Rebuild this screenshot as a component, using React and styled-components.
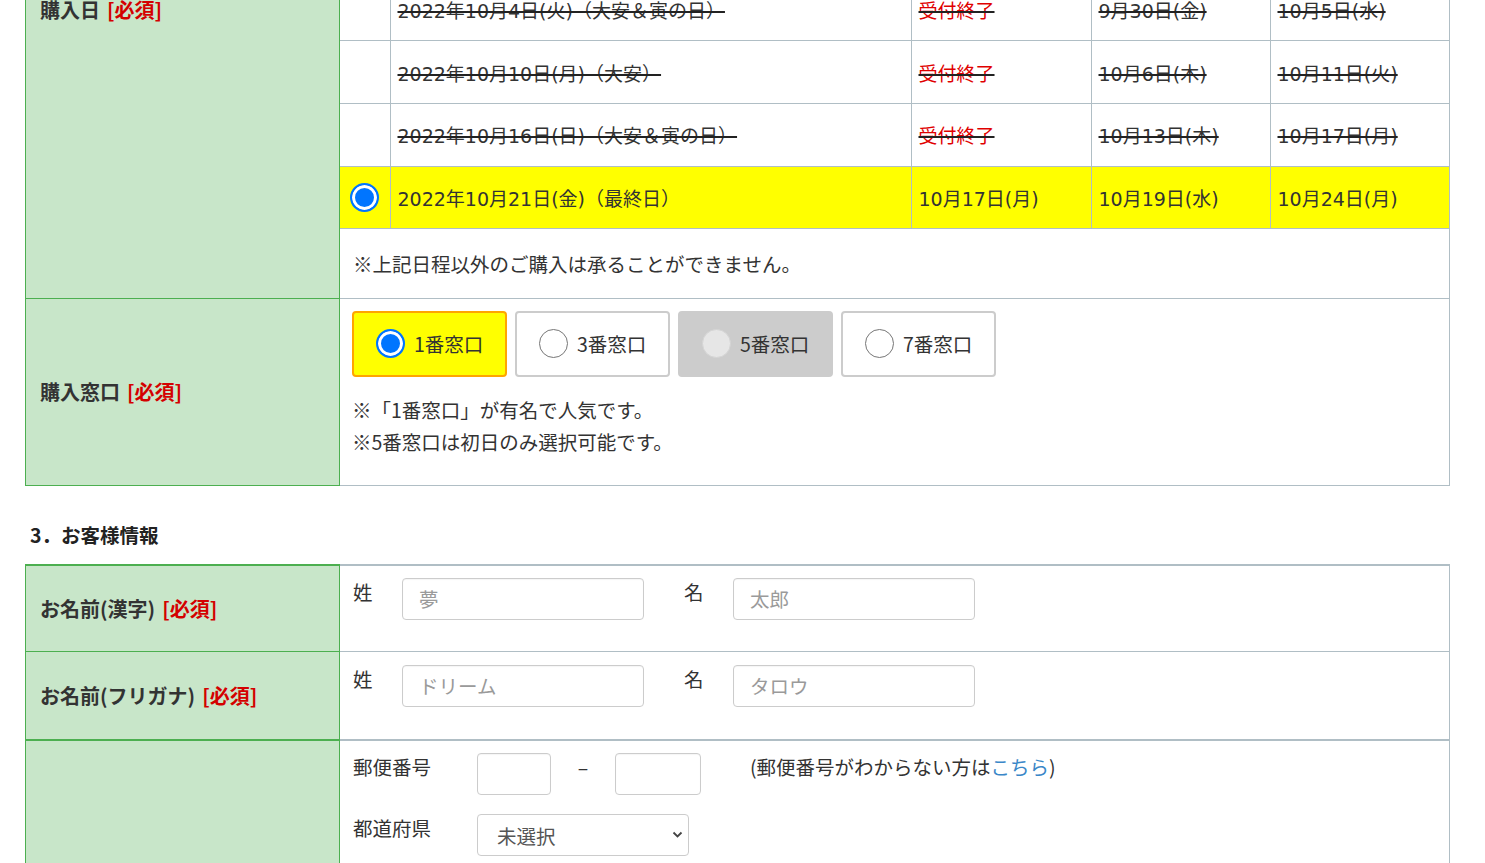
import React from 'react';
import styled, { createGlobalStyle, css } from 'styled-components';

const GlobalStyle = createGlobalStyle`
  html, body { margin: 0; padding: 0; background: #fff; }
  body {
    font-family: "Noto Sans CJK JP", "Noto Sans", sans-serif;
    font-size: 19.5px;
    color: #333;
  }
  * { box-sizing: border-box; }
`;

const Page = styled.div`
  width: 1425px;
  margin: -279px 0 0 25px;
`;

const FormTable = styled.table`
  width: 100%;
  border-collapse: collapse;
  table-layout: fixed;
`;

const Label = styled.th`
  width: 314px;
  background: #c8e6c9;
  border: 1px solid #4caf50;
  border-top-width: ${p => (p.$thick ? '2px' : '1px')};
  text-align: left;
  vertical-align: middle;
  padding: 0 14px;
  font-weight: bold;
  font-size: 20px;
  color: #333;
`;

const Required = styled.span`
  color: #d40000;
  margin-left: 7px;
`;

const Cell = styled.td`
  border: 1px solid #b0bec5;
  border-top-width: ${p => (p.$thick ? '2px' : '1px')};
  padding: ${p => p.$pad || '0'};
  vertical-align: top;
`;

const DateTable = styled.table`
  width: 100%;
  border-collapse: collapse;
  table-layout: fixed;
  border-style: hidden;
`;

const DateRow = styled.tr`
  background: ${p => (p.$active ? '#ffff00' : '#fff')};
`;

const HeadCell = styled.th`
  height: 68px;
  border: 1px solid #b0bec5;
  background: #eceff1;
  font-weight: bold;
  text-align: left;
  padding: 0 8px;
`;

const DateCell = styled.td`
  height: 62.7px;
  border: 1px solid #b0bec5;
  padding: 0 7px;
  vertical-align: middle;
  white-space: nowrap;
  font-family: "DejaVu Sans", "Noto Sans CJK JP", sans-serif;
  font-size: 19px;
  text-align: ${p => (p.$center ? 'center' : 'left')};
  ${p =>
    p.$closed &&
    css`
      text-decoration: line-through;
      text-decoration-thickness: 2px;
      text-decoration-color: #222;
    `}
`;

const Closed = styled.span`
  color: #e00000;
`;

const NoteCell = styled.td`
  height: 69px;
  border: 1px solid #b0bec5;
  padding: 0 13px;
  vertical-align: middle;
`;

const RadioDot = styled.span`
  display: inline-block;
  flex: none;
  width: 29px;
  height: 29px;
  border-radius: 50%;
  vertical-align: middle;
  ${p =>
    p.$checked
      ? css`
          background: #0075ff;
          border: 2px solid #0075ff;
          box-shadow: inset 0 0 0 3px #fff;
        `
      : p.$disabled
      ? css`
          background: #e6e6e6;
          border: 1px solid #d4d4d4;
        `
      : css`
          background: #fff;
          border: 1.5px solid #767676;
        `}
`;

const WindowList = styled.div`
  display: flex;
  gap: 8px;
`;

const WindowOption = styled.label`
  display: flex;
  align-items: center;
  gap: 9px;
  width: 155px;
  height: 66px;
  padding-left: 22px;
  border: 2px solid ${p => (p.$checked ? '#ffa500' : '#ccc')};
  border-radius: 4px;
  background: ${p => (p.$checked ? '#ffff00' : p.$disabled ? '#ccc' : '#fff')};
  color: #333;
`;

const Notes = styled.div`
  margin-top: 17px;
  line-height: 32px;
`;

const SectionTitle = styled.h3`
  margin: 37px 0 17px 5px;
  font-size: 19.5px;
  font-weight: bold;
  line-height: 24px;
  color: #222;
`;

const FieldRow = styled.div`
  display: flex;
  align-items: flex-start;
  margin-top: ${p => p.$mt || 0}px;
`;

const FieldLabel = styled.span`
  flex: none;
  width: ${p => p.$w}px;
  margin-left: ${p => p.$ml || 0}px;
  line-height: 28px;
`;

const TextInput = styled.input`
  width: ${p => p.$w}px;
  height: 42px;
  border: 1px solid #ccc;
  border-radius: 4px;
  padding: 0 16px;
  font-family: inherit;
  font-size: 19.5px;
  color: #333;
  background: #fff;
  box-shadow: inset 0 1px 1px rgba(0, 0, 0, 0.04);
  &::placeholder {
    color: #9a9a9a;
  }
`;

const Dash = styled.span`
  width: 64px;
  text-align: center;
  line-height: 28px;
`;

const Hint = styled.span`
  margin-left: 49px;
  line-height: 28px;
`;

const HintLink = styled.a`
  color: #3a87c8;
  text-decoration: none;
`;

const SelectWrap = styled.span`
  position: relative;
  display: inline-block;
  width: 212px;
  height: 42px;
`;

const Select = styled.select`
  width: 100%;
  height: 100%;
  appearance: none;
  border: 1px solid #ccc;
  border-radius: 4px;
  padding: 2px 0 0 19px;
  font-family: inherit;
  font-size: 19.5px;
  color: #555;
  background: #fff;
`;

const Chevron = styled.svg`
  position: absolute;
  right: 6px;
  top: 17px;
  pointer-events: none;
`;

const dates = [
  { date: '2022年9月16日(金)（一粒万倍日）', a: '受付終了', b: '9月12日(月)', c: '9月20日(火)', closed: true },
  { date: '2022年9月22日(木)（大安）', a: '受付終了', b: '9月19日(月)', c: '9月27日(火)', closed: true },
  { date: '2022年9月28日(水)（天赦日）', a: '受付終了', b: '9月26日(月)', c: '10月3日(月)', closed: true },
  { date: '2022年10月4日(火)（大安＆寅の日）', a: '受付終了', b: '9月30日(金)', c: '10月5日(水)', closed: true },
  { date: '2022年10月10日(月)（大安）', a: '受付終了', b: '10月6日(木)', c: '10月11日(火)', closed: true },
  { date: '2022年10月16日(日)（大安＆寅の日）', a: '受付終了', b: '10月13日(木)', c: '10月17日(月)', closed: true },
  { date: '2022年10月21日(金)（最終日）', a: '10月17日(月)', b: '10月19日(水)', c: '10月24日(月)', closed: false },
];

const windows = [
  { name: '1番窓口', checked: true },
  { name: '3番窓口' },
  { name: '5番窓口', disabled: true },
  { name: '7番窓口' },
];

export default function App() {
  return (
    <>
      <GlobalStyle />
      <Page>
        <FormTable>
          <tbody>
            <tr>
              <Label>
                購入日<Required>[必須]</Required>
              </Label>
              <Cell>
                <DateTable>
                  <colgroup>
                    <col style={{ width: 50 }} />
                    <col style={{ width: 521 }} />
                    <col style={{ width: 180 }} />
                    <col style={{ width: 179 }} />
                    <col />
                  </colgroup>
                  <thead>
                    <tr>
                      <HeadCell />
                      <HeadCell>購入日</HeadCell>
                      <HeadCell>申込締切</HeadCell>
                      <HeadCell>抽選発表</HeadCell>
                      <HeadCell>受取日</HeadCell>
                    </tr>
                  </thead>
                  <tbody>
                    {dates.map(d => (
                      <DateRow key={d.date} $active={!d.closed}>
                        <DateCell $center>{!d.closed && <RadioDot $checked />}</DateCell>
                        <DateCell $closed={d.closed}>{d.date}</DateCell>
                        <DateCell $closed={d.closed}>
                          {d.closed ? <Closed>{d.a}</Closed> : d.a}
                        </DateCell>
                        <DateCell $closed={d.closed}>{d.b}</DateCell>
                        <DateCell $closed={d.closed}>{d.c}</DateCell>
                      </DateRow>
                    ))}
                    <tr>
                      <NoteCell colSpan={5}>※上記日程以外のご購入は承ることができません。</NoteCell>
                    </tr>
                  </tbody>
                </DateTable>
              </Cell>
            </tr>
            <tr>
              <Label>
                購入窓口<Required>[必須]</Required>
              </Label>
              <Cell $pad="12px 12px 27px">
                <WindowList>
                  {windows.map(w => (
                    <WindowOption key={w.name} $checked={w.checked} $disabled={w.disabled}>
                      <RadioDot $checked={w.checked} $disabled={w.disabled} />
                      {w.name}
                    </WindowOption>
                  ))}
                </WindowList>
                <Notes>
                  <div>※「1番窓口」が有名で人気です。</div>
                  <div>※5番窓口は初日のみ選択可能です。</div>
                </Notes>
              </Cell>
            </tr>
          </tbody>
        </FormTable>

        <SectionTitle>3．お客様情報</SectionTitle>

        <FormTable>
          <tbody>
            <tr>
              <Label $thick>
                お名前(漢字)<Required>[必須]</Required>
              </Label>
              <Cell $thick $pad="12px 13px 31px">
                <FieldRow>
                  <FieldLabel $w={49}>姓</FieldLabel>
                  <TextInput $w={242} placeholder="夢" />
                  <FieldLabel $w={49} $ml={40}>名</FieldLabel>
                  <TextInput $w={242} placeholder="太郎" />
                </FieldRow>
              </Cell>
            </tr>
            <tr>
              <Label>
                お名前(フリガナ)<Required>[必須]</Required>
              </Label>
              <Cell $pad="13px 13px 32px">
                <FieldRow>
                  <FieldLabel $w={49}>姓</FieldLabel>
                  <TextInput $w={242} placeholder="ドリーム" />
                  <FieldLabel $w={49} $ml={40}>名</FieldLabel>
                  <TextInput $w={242} placeholder="タロウ" />
                </FieldRow>
              </Cell>
            </tr>
            <tr>
              <Label $thick>
                ご住所<Required>[必須]</Required>
              </Label>
              <Cell $thick $pad="12px 13px 30px">
                <FieldRow>
                  <FieldLabel $w={124}>郵便番号</FieldLabel>
                  <TextInput $w={74} />
                  <Dash>–</Dash>
                  <TextInput $w={86} />
                  <Hint>
                    (郵便番号がわからない方は<HintLink href="#">こちら</HintLink>)
                  </Hint>
                </FieldRow>
                <FieldRow $mt={19}>
                  <FieldLabel $w={124}>都道府県</FieldLabel>
                  <SelectWrap>
                    <Select defaultValue="">
                      <option value="">未選択</option>
                      <option>東京都</option>
                      <option>大阪府</option>
                    </Select>
                    <Chevron width="11" height="8" viewBox="0 0 11 8">
                      <path d="M1.5 1.5 L5.5 5.5 L9.5 1.5" fill="none" stroke="#444" strokeWidth="1.8" />
                    </Chevron>
                  </SelectWrap>
                </FieldRow>
                <FieldRow $mt={19}>
                  <FieldLabel $w={124}>市区町村</FieldLabel>
                  <TextInput $w={480} />
                </FieldRow>
                <FieldRow $mt={19}>
                  <FieldLabel $w={124}>番地</FieldLabel>
                  <TextInput $w={480} />
                </FieldRow>
                <FieldRow $mt={19}>
                  <FieldLabel $w={124}>建物名</FieldLabel>
                  <TextInput $w={480} />
                </FieldRow>
              </Cell>
            </tr>
          </tbody>
        </FormTable>
      </Page>
    </>
  );
}
